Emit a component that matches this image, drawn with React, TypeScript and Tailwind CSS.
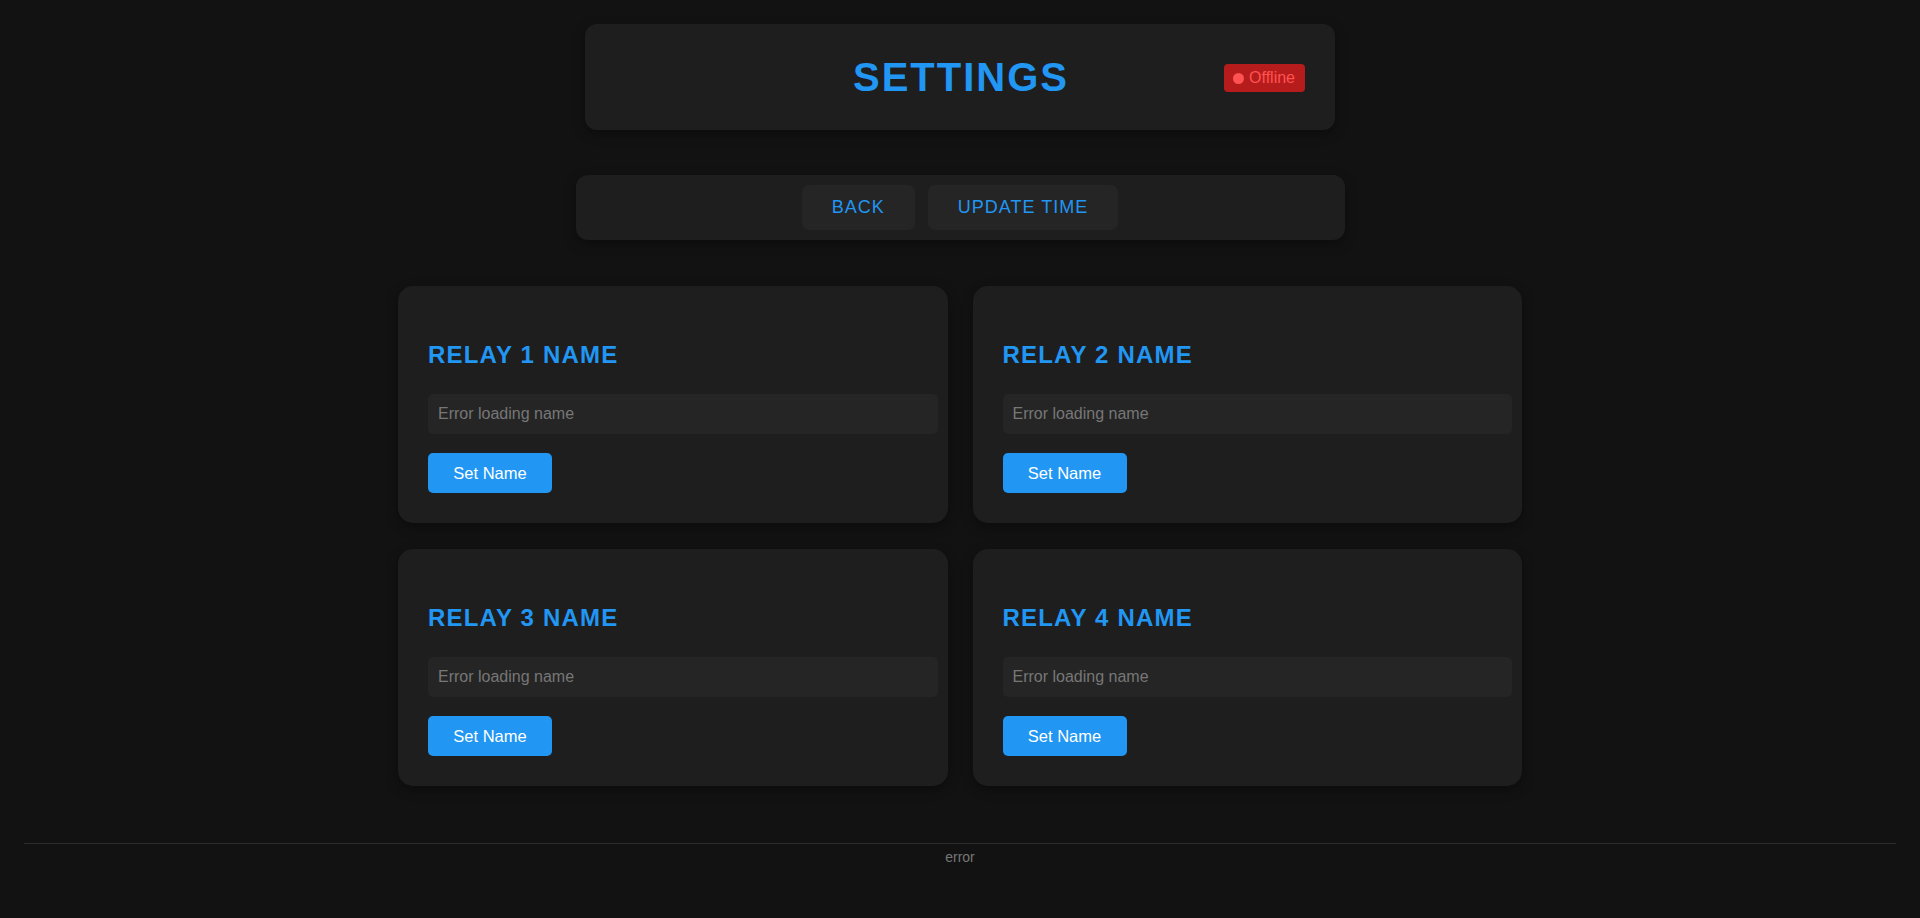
import { useState } from "react";

const relays = [1, 2, 3, 4];

function RelayCard({ id }: { id: number }) {
    const [name, setName] = useState("");

    return (
        <div className="bg-[#1e1e1e] rounded-[15px] px-[30px] pt-[30px] pb-[30px] shadow-[0_4px_12px_rgba(0,0,0,0.35)]">
            <h2 className="mt-[25px] text-[24px] leading-[28px] font-bold tracking-[1.2px] text-[#2196f3]">
                RELAY {id} NAME
            </h2>
            <input
                type="text"
                value={name}
                onChange={e => setName(e.target.value)}
                placeholder="Error loading name"
                className="mt-[25px] block w-[calc(100%+20px)] h-10 px-[10px] bg-[#252525] rounded-[5px] text-[16px] text-[#ddd] placeholder:text-[#777] outline-none"
            />
            <button className="mt-[19px] block h-10 w-[124px] bg-[#2196f3] rounded-[5px] text-white text-[16.5px] leading-[38px]">
                Set Name
            </button>
        </div>
    );
}

export default function App() {
    return (
        <div className="min-h-screen bg-[#121212] font-['Liberation_Sans',Arial,sans-serif] pt-[24px] overflow-hidden">

            {/* Header */}
            <div className="relative w-[750px] h-[106px] mx-auto bg-[#1e1e1e] rounded-[12px] flex items-center justify-center shadow-[0_4px_12px_rgba(0,0,0,0.35)]">
                <h1 className="text-[40px] leading-[46px] font-bold tracking-[2px] text-[#2196f3] pl-[2px]">SETTINGS</h1>
                <div className="absolute right-[30px] top-[40px] h-[28px] pl-[9px] pr-[10px] flex items-center gap-[5px] bg-[#b71c1c] rounded-[4px]">
                    <span className="w-[11px] h-[11px] rounded-full bg-[#ff5252]" />
                    <span className="text-[16px] text-[#ff5252]">Offline</span>
                </div>
            </div>

            {/* Nav */}
            <div className="w-[769px] mx-auto mt-[45px] py-[10px] bg-[#1e1e1e] rounded-[12px] flex justify-center gap-[13px] shadow-[0_4px_12px_rgba(0,0,0,0.35)]">
                <button className="px-[30px] py-[12px] bg-[#252525] rounded-[7px] text-[18px] leading-[21px] tracking-[1px] text-[#2196f3]">
                    BACK
                </button>
                <button className="px-[30px] py-[12px] bg-[#252525] rounded-[7px] text-[18px] leading-[21px] tracking-[1px] text-[#2196f3]">
                    UPDATE TIME
                </button>
            </div>

            {/* Relays */}
            <div className="w-[1124px] mx-auto mt-[46px] grid grid-cols-2 gap-x-[25px] gap-y-[26px]">
                {relays.map(id => (
                    <RelayCard key={id} id={id} />
                ))}
            </div>

            {/* Footer */}
            <div className="mx-[24px] mt-[57px] border-t border-[#2c2c2c] pt-[5px] text-center text-[14px] leading-[16px] text-[#777]">
                error
            </div>
        </div>
    );
}
